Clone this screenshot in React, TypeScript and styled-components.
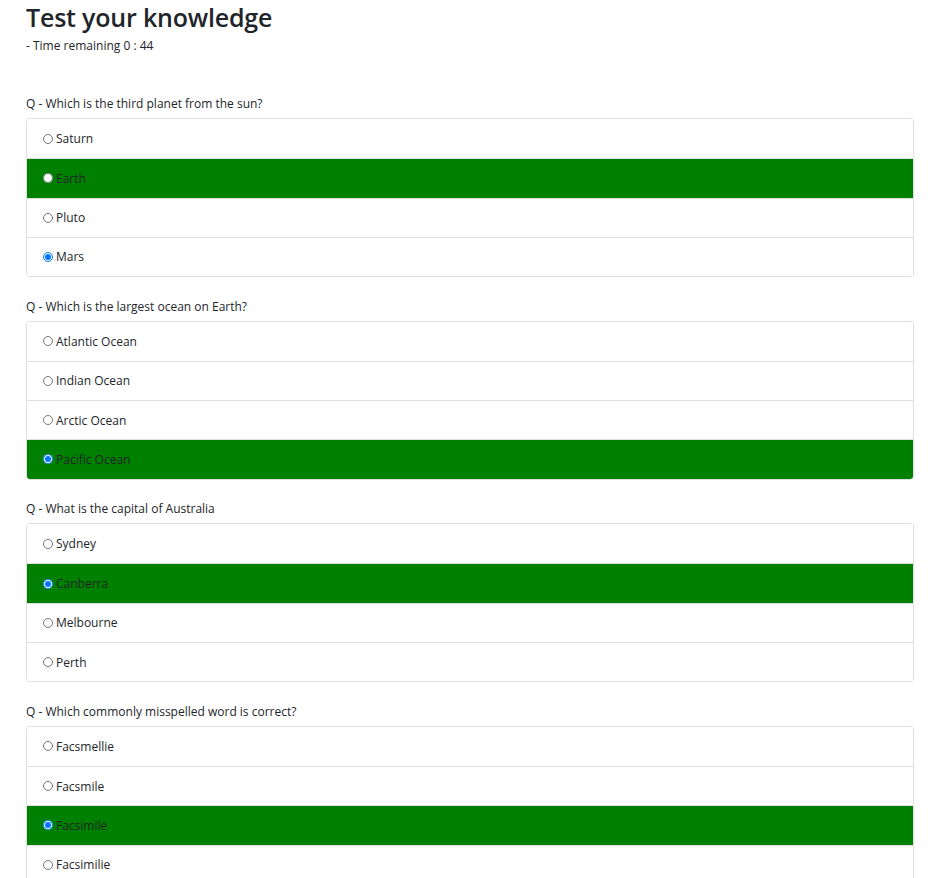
import React from "react";
import styled, { createGlobalStyle } from "styled-components";

const Global = createGlobalStyle`
  html, body { margin: 0; padding: 0; background: #fff; }
  body { font-family: "Open Sans", "Noto Sans", sans-serif; color: #212529; }
`;

const Page = styled.div`
  padding: 0 25px 0 26px;
`;

const Title = styled.h1`
  font-size: 25px;
  font-weight: 600;
  line-height: 1.2;
  margin: 0;
  padding-top: 2px;
  letter-spacing: -0.2px;
`;

const Timer = styled.div`
  font-size: 12px;
  line-height: 18px;
  margin: 5px 0 40px;
`;

const Question = styled.div`
  font-size: 12px;
  line-height: 18px;
  margin-bottom: 5px;
`;

const List = styled.div`
  display: flex;
  flex-direction: column;
  border: 1px solid #dfdfdf;
  border-radius: 4px;
  margin-bottom: 20.6px;
  overflow: hidden;
`;

const Item = styled.label<{ $green: boolean }>`
  display: flex;
  align-items: center;
  height: 39.25px;
  box-sizing: border-box;
  padding-left: 16px;
  font-size: 12px;
  background: ${(p) => (p.$green ? "#008000" : "#fff")};
  color: #212529;
  & + & { border-top: 1px solid #dfdfdf; }
`;

const Radio = styled.input`
  margin: 0 3px 0 0;
  width: 10px;
  height: 10px;
`;

type Q = { q: string; options: string[]; correct: number; selected: number };

const quiz: Q[] = [
  { q: "Q - Which is the third planet from the sun?", options: ["Saturn", "Earth", "Pluto", "Mars"], correct: 1, selected: 3 },
  { q: "Q - Which is the largest ocean on Earth?", options: ["Atlantic Ocean", "Indian Ocean", "Arctic Ocean", "Pacific Ocean"], correct: 3, selected: 3 },
  { q: "Q - What is the capital of Australia", options: ["Sydney", "Canberra", "Melbourne", "Perth"], correct: 1, selected: 1 },
  { q: "Q - Which commonly misspelled word is correct?", options: ["Facsmellie", "Facsmile", "Facsimile", "Facsimilie"], correct: 2, selected: 2 },
];

export default function App() {
  return (
    <Page>
      <Global />
      <Title>Test your knowledge</Title>
      <Timer>- Time remaining 0 : 44</Timer>
      {quiz.map((item, qi) => (
        <div key={qi}>
          <Question>{item.q}</Question>
          <List>
            {item.options.map((o, oi) => (
              <Item key={oi} $green={oi === item.correct}>
                <Radio type="radio" name={`q${qi}`} defaultChecked={oi === item.selected} />
                {o}
              </Item>
            ))}
          </List>
        </div>
      ))}
    </Page>
  );
}
